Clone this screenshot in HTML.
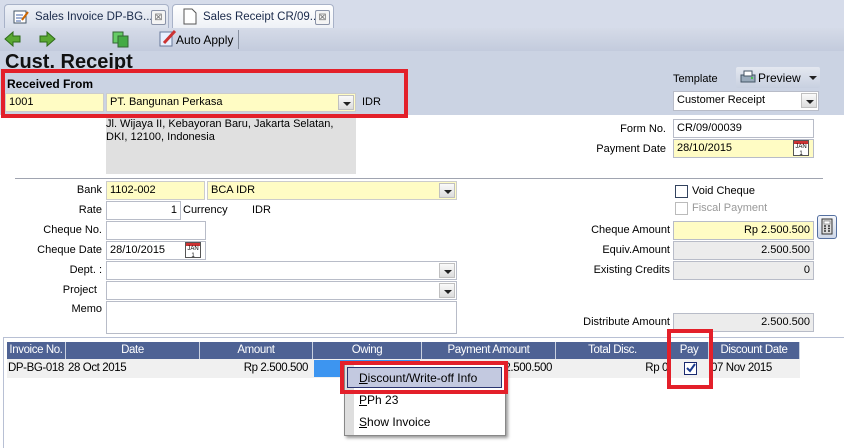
<!DOCTYPE html>
<html><head><meta charset="utf-8"><style>
*{box-sizing:border-box;margin:0;padding:0}
body{width:844px;height:448px;overflow:hidden;background:#fff;font-family:"Liberation Sans",sans-serif;font-size:11px;color:#000;position:relative}
.a{position:absolute}
.band{left:0;top:0;width:844px;height:115px;background:#cbd3e3}
.tabbar{left:0;top:0;width:844px;height:28px;background:#d6dcea}
.tab{top:4px;height:24px;border:1px solid #a8b2c8;border-bottom:none;border-radius:4px 4px 0 0;background:linear-gradient(#eef1f7,#d8deea);font-size:11.5px;padding:6px 0 0 30px;color:#1a2a4a;white-space:nowrap}
.tb{left:0;top:28px;width:844px;height:23px;background:linear-gradient(#d5dbe8,#c3cbdd)}
.x{position:absolute;top:5px;width:15px;height:15px;border:1px solid #8a93a8;border-radius:2px;background:#f4f4f4;font-size:10px;line-height:13px;text-align:center;color:#777}
.in{position:absolute;height:19px;border:1px solid #b8bcc8;background:#fff;padding:2px 3px;white-space:nowrap;overflow:hidden}
.y{background:#fffcc4}
.g{background:#ececec}
.r{text-align:right}
.dd{position:absolute;right:1px;top:1px;width:16px;height:15px;background:linear-gradient(#fafafa,#dcdcdc);border:1px solid #c0c0c0}
.dd:after{content:"";position:absolute;left:4px;top:6px;border-left:4px solid transparent;border-right:4px solid transparent;border-top:4px solid #222}
.lbl{position:absolute;text-align:right;white-space:nowrap}
.cal{position:absolute;width:16px;height:16px;border:1px solid #555;background:#fff;font-size:6px;text-align:center;line-height:7px}
.cal:before{content:"";display:block;height:3px;background:#c33}
.red{position:absolute;border:4px solid #e3202a}
.gh{position:absolute;top:342px;height:17px;background:#4e6294;color:#fff;text-align:center;border-right:1px solid #c8d0e0;font-size:11.5px;line-height:17px;letter-spacing:-.4px}
.gc{position:absolute;top:359px;height:19px;line-height:19px;font-size:11.5px;letter-spacing:-.4px;white-space:nowrap}
.cb{position:absolute;width:13px;height:13px;border:1px solid #33435e;background:#fff}
</style></head><body>
<div class="a band"></div>
<div class="a tabbar"></div>
<div class="a tab" style="left:4px;width:165px">Sales Invoice DP-BG...<span class="x" style="left:146px">⊠</span>
<svg class="a" style="left:8px;top:4px" width="16" height="16"><rect x="1" y="2" width="12" height="12" fill="#fff" stroke="#456"/><path d="M3 6h7M3 9h7M3 12h5" stroke="#46a"/><path d="M9 11l6-8" stroke="#c60" stroke-width="2"/></svg></div>
<div class="a tab" style="left:172px;width:162px;background:linear-gradient(#fff,#eef1f6)">Sales Receipt CR/09...<span class="x" style="left:142px">⊠</span>
<svg class="a" style="left:10px;top:3px" width="14" height="17"><path d="M1 1h8l4 4v11H1z" fill="#fff" stroke="#555"/></svg></div>
<div class="a tb"></div>
<svg class="a" style="left:4px;top:31px" width="52" height="16"><path d="M1 8l8-7v4h7v6H9v4z" fill="#5aa832" stroke="#2d6a18"/><path d="M51 8l-8-7v4h-7v6h7v4z" fill="#5aa832" stroke="#2d6a18"/></svg>
<svg class="a" style="left:112px;top:31px" width="18" height="17"><rect x="1" y="1" width="10" height="11" fill="#6c6" stroke="#363"/><rect x="6" y="5" width="10" height="11" fill="#4a4" stroke="#363"/></svg>
<svg class="a" style="left:159px;top:29px" width="18" height="18"><rect x="1" y="3" width="12" height="14" fill="#e8f0ff" stroke="#679"/><path d="M5 14l11-12" stroke="#c33" stroke-width="3"/></svg>
<div class="a" style="left:176px;top:33px;font-size:12px">Auto Apply</div>
<div class="a" style="left:238px;top:30px;width:1px;height:19px;background:#8890a0"></div>
<div class="a" style="left:5px;top:51px;font-size:20px;font-weight:bold;color:#111">Cust. Receipt</div>
<div class="red" style="left:1px;top:69px;width:407px;height:49px;z-index:3"></div>
<div class="a" style="left:7px;top:77px;font-weight:bold;font-size:12px">Received From</div>
<div class="in y" style="left:5px;top:93px;width:99px;border-color:#ccc">1001</div>
<div class="in y" style="left:106px;top:93px;width:250px;border-color:#ccc">PT. Bangunan Perkasa<span class="dd"></span></div>
<div class="a" style="left:362px;top:96px">IDR</div>
<div class="a" style="left:106px;top:115px;width:250px;height:59px;background:#e0e0e0;padding:3px 0 0 0;line-height:13px">Jl. Wijaya II, Kebayoran Baru, Jakarta Selatan,<br>DKI, 12100, Indonesia</div>
<div class="a" style="left:673px;top:73px">Template</div>
<div class="a" style="left:736px;top:67px;width:84px;height:21px;background:linear-gradient(#e4e8f0,#c8d0e0);border-radius:2px;padding:4px 0 0 22px;font-size:12px">Preview<span style="position:absolute;right:3px;top:9px;border-left:4px solid transparent;border-right:4px solid transparent;border-top:4px solid #222"></span>
<svg class="a" style="left:4px;top:3px" width="16" height="14"><rect x="1" y="5" width="14" height="7" fill="#9ab" stroke="#456"/><rect x="4" y="1" width="8" height="5" fill="#fff" stroke="#456"/><circle cx="12" cy="8" r="1" fill="#3c3"/></svg></div>
<div class="in" style="left:673px;top:91px;width:146px;height:20px">Customer Receipt<span class="dd"></span></div>
<div class="lbl" style="right:178px;top:123px">Form No.</div>
<div class="in" style="left:673px;top:119px;width:141px">CR/09/00039</div>
<div class="lbl" style="right:178px;top:143px">Payment Date</div>
<div class="in y" style="left:673px;top:139px;width:141px">28/10/2015</div>
<div class="cal" style="left:793px;top:140px">JAN<br>1</div>
<div class="a" style="left:15px;top:178px;width:808px;height:1px;background:#a0a4b0"></div>
<div class="lbl" style="right:742px;top:184px">Bank</div>
<div class="in y" style="left:106px;top:181px;width:99px;border-color:#ccc">1102-002</div>
<div class="in y" style="left:207px;top:181px;width:250px;border-color:#ccc">BCA IDR<span class="dd"></span></div>
<div class="lbl" style="right:742px;top:204px">Rate</div>
<div class="in r" style="left:106px;top:201px;width:75px">1</div>
<div class="a" style="left:183px;top:204px">Currency</div><div class="a" style="left:252px;top:204px">IDR</div>
<div class="lbl" style="right:742px;top:224px">Cheque No.</div>
<div class="in" style="left:106px;top:221px;width:100px"></div>
<div class="lbl" style="right:742px;top:244px">Cheque Date</div>
<div class="in" style="left:106px;top:241px;width:100px">28/10/2015</div>
<div class="cal" style="left:185px;top:242px">JAN<br>1</div>
<div class="lbl" style="right:742px;top:264px">Dept. :</div>
<div class="in" style="left:106px;top:261px;width:351px"><span class="dd"></span></div>
<div class="lbl" style="right:747px;top:284px">Project</div>
<div class="in" style="left:106px;top:281px;width:351px"><span class="dd"></span></div>
<div class="lbl" style="right:742px;top:303px">Memo</div>
<div class="in" style="left:106px;top:301px;width:351px;height:33px"></div>
<div class="cb" style="left:675px;top:185px"></div><div class="a" style="left:692px;top:185px">Void Cheque</div>
<div class="cb" style="left:675px;top:202px;border-color:#bbb"></div><div class="a" style="left:692px;top:202px;color:#999">Fiscal Payment</div>
<div class="lbl" style="right:174px;top:224px">Cheque Amount</div>
<div class="in y r" style="left:673px;top:221px;width:141px">Rp 2.500.500</div>
<div class="a" style="left:817px;top:215px;width:20px;height:24px;border:1px solid #5570a0;border-radius:3px;background:linear-gradient(#f4f6fa,#cfd8e8)"><svg width="18" height="22" style="display:block"><rect x="4" y="3" width="10" height="15" fill="#ddd" stroke="#333"/><rect x="6" y="5" width="6" height="3" fill="#fff" stroke="#555" stroke-width=".5"/><path d="M6 10h2M10 10h2M6 12.5h2M10 12.5h2M6 15h2M10 15h2" stroke="#333" stroke-width="1.5"/></svg></div>
<div class="lbl" style="right:174px;top:244px">Equiv.Amount</div>
<div class="in g r" style="left:673px;top:241px;width:141px">2.500.500</div>
<div class="lbl" style="right:174px;top:264px">Existing Credits</div>
<div class="in g r" style="left:673px;top:261px;width:141px">0</div>
<div class="lbl" style="right:174px;top:316px">Distribute Amount</div>
<div class="in g r" style="left:673px;top:313px;width:141px">2.500.500</div>
<div class="a" style="left:3px;top:337px;width:841px;height:111px;border:1px solid #b8c0d4;border-right:none;border-bottom:none"></div>
<div class="gh" style="left:7px;width:59px">Invoice No.</div>
<div class="gh" style="left:66px;width:134px">Date</div>
<div class="gh" style="left:200px;width:113px">Amount</div>
<div class="gh" style="left:313px;width:109px">Owing</div>
<div class="gh" style="left:422px;width:134px">Payment Amount</div>
<div class="gh" style="left:556px;width:114px">Total Disc.</div>
<div class="gh" style="left:670px;width:39px">Pay</div>
<div class="gh" style="left:709px;width:91px">Discount Date</div>
<div class="a" style="left:7px;top:359px;width:793px;height:19px;background:#f0f0f0"></div>
<div class="gc" style="left:8px">DP-BG-018</div>
<div class="gc" style="left:68px">28 Oct 2015</div>
<div class="gc r" style="left:200px;width:108px">Rp 2.500.500</div>
<div class="a" style="left:314px;top:360px;width:106px;height:17px;background:#3d95f0"></div>
<div class="gc r" style="left:422px;width:130px">Rp 2.500.500</div>
<div class="gc r" style="left:556px;width:112px">Rp 0</div>
<div class="cb" style="left:684px;top:362px;border-color:#1a2a70"><svg width="11" height="11" style="display:block"><path d="M2 5l3 3 5-7" stroke="#1a3a90" stroke-width="2" fill="none"/></svg></div>
<div class="gc" style="left:711px">07 Nov 2015</div>
<div class="a" style="left:344px;top:362px;width:162px;height:74px;background:#fff;border:1px solid #888;box-shadow:2px 2px 3px #999"></div>
<div class="a" style="left:345px;top:363px;width:9px;height:72px;background:#dedede"></div>
<div class="a" style="left:347px;top:367px;width:155px;height:21px;background:#c3c9e0;border:1px solid #2a3470"></div>
<div class="a" style="left:359px;top:371px;font-size:12px"><u>D</u>iscount/Write-off Info</div>
<div class="a" style="left:359px;top:393px;font-size:12px"><u>P</u>Ph 23</div>
<div class="a" style="left:359px;top:415px;font-size:12px"><u>S</u>how Invoice</div>
<div class="red" style="left:340px;top:361px;width:168px;height:33px"></div>
<div class="red" style="left:667px;top:329px;width:46px;height:60px"></div>
</body></html>
